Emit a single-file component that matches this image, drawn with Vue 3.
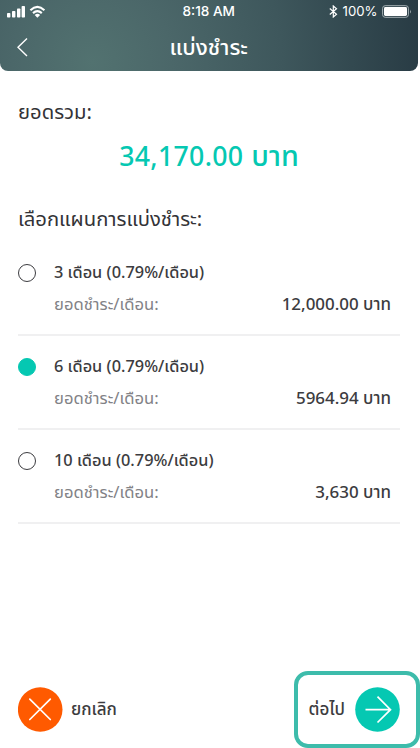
<script setup>
import { ref } from 'vue'

const selected = ref(6)
const plans = [
  { months: 3, amount: '12,000.00' },
  { months: 6, amount: '5964.94' },
  { months: 10, amount: '3,630' }
]
</script>

<template>
  <main class="screen">
    <header class="header">
      <div class="status">
        <div class="signal">
          <svg width="41" height="14" viewBox="0 0 41 14" fill="#fff">
            <rect x="1" y="8" width="3.400" height="4.500" rx=".8" />
            <rect x="6" y="6" width="3.400" height="6.500" rx=".8" />
            <rect x="11" y="3.500" width="3.400" height="9" rx=".8" />
            <rect x="15.600" y="1" width="3.400" height="11.500" rx=".8" />
            <g fill="none" stroke="#fff" stroke-width="2.100">
              <path d="M24.400 5.200Q31.400 -1.400 38.400 5.200" />
              <path d="M27 8.100Q31.400 4.200 35.800 8.100" />
            </g>
            <path d="M28.700 9.900Q31.400 7.800 34.100 9.900L31.400 12.700Z" />
          </svg>
        </div>
        <span class="clock">8:18 AM</span>
        <div class="power">
          <svg class="bluetooth" width="9" height="13" viewBox="0 0 9 13" fill="none" stroke="#fff" stroke-width="1.200">
            <path d="M.8 3.500L7.500 9.200L4.300 12V1L7.500 3.800L.8 9.500" />
          </svg>
          <span class="percent">100%</span>
          <svg width="30" height="13" viewBox="0 0 30 13">
            <rect x=".6" y=".7" width="25.800" height="11.600" rx="2.600" fill="none" stroke="#a5b0b4" />
            <rect x="2" y="2.100" width="23" height="8.800" rx="1.400" fill="#fff" />
            <path d="M28 4.500Q29.600 6.500 28 8.500Z" fill="#a5b0b4" />
          </svg>
        </div>
      </div>
      <div class="nav">
        <svg class="back" width="11" height="20" viewBox="0 0 11 20" fill="none" stroke="#fff" stroke-width="1.400">
          <path d="M10 1.500L1 10.300L10 19" />
        </svg>
        <h1 class="title">แบ่งชำระ</h1>
      </div>
    </header>

    <section class="content">
      <h2 class="label total-label">ยอดรวม:</h2>
      <p class="total"><span class="total-number">34,170.00</span><span class="total-unit">บาท</span></p>
      <h2 class="label plan-label">เลือกแผนการแบ่งชำระ:</h2>
      <ul class="plans">
        <li v-for="plan in plans" :key="plan.months" class="plan" @click="selected = plan.months">
          <span class="radio" :class="{ on: selected === plan.months }"></span>
          <div class="details">
            <p class="name">{{ plan.months }} เดือน (0.79%/เดือน)</p>
            <div class="payment">
              <span class="caption">ยอดชำระ/เดือน:</span>
              <span class="amount">{{ plan.amount }} บาท</span>
            </div>
          </div>
        </li>
      </ul>
    </section>

    <footer class="footer">
      <button class="action cancel">
        <svg width="45" height="45" viewBox="0 0 45 45">
          <circle cx="22.200" cy="22.500" r="22.300" fill="#ff5a00" />
          <path d="M11.800 12.200L32.300 32.500M32.300 12.200L11.800 32.500" stroke="#fff" stroke-width="1.700" stroke-linecap="round" />
        </svg>
        <span class="cancel-text">ยกเลิก</span>
      </button>
      <button class="action next">
        <span class="next-text">ต่อไป</span>
        <svg width="45" height="45" viewBox="0 0 45 45">
          <circle cx="22.500" cy="22.500" r="22.300" fill="#05c8b2" />
          <path d="M10.500 22.700H35M22.500 9.700L35.500 22.700L22.500 35.500" fill="none" stroke="#fff" stroke-width="1.700" />
        </svg>
      </button>
    </footer>
  </main>
</template>

<style>
body {
  background: #fff;
}
</style>

<style scoped>
* {
  box-sizing: border-box;
}
.screen {
  width: 420px;
  height: 748px;
  display: flex;
  flex-direction: column;
  overflow: hidden;
  background: #fff;
  color: #3c3c40;
  font-family: "Noto Sans", "Noto Sans Thai", "Prompt", "Kanit", sans-serif;
}
h1, h2, p, ul {
  margin: 0;
  padding: 0;
  font-weight: 500;
  white-space: nowrap;
}
.header {
  width: 417.500px;
  height: 71px;
  border-radius: 0 0 8px 8px;
  color: #fff;
  background: radial-gradient(circle at 92px 62px, #527270 0, #4b6769 80px, #3e575c 190px, #283b44 330px);
}
.status {
  height: 23px;
  display: grid;
  grid-template-columns: 1fr 60px 1fr;
  align-items: center;
  padding: 0 6px;
}
.signal {
  display: flex;
}
.clock {
  font: 500 13.600px/23px Inter, sans-serif;
  text-align: center;
  white-space: nowrap;
}
.power {
  display: flex;
  align-items: center;
  justify-content: flex-end;
}
.percent {
  font: 400 13.200px/23px Inter, sans-serif;
  margin: 0 4px 0 5px;
}
.nav {
  height: 48px;
  display: grid;
  grid-template-columns: 18px 1fr 18px;
  align-items: center;
  padding: 0 17px;
}
.title {
  font-size: 22px;
  line-height: 44px;
  padding-bottom: 2px;
  text-align: center;
}
.content {
  flex: 1;
  padding: 0 20px 0 18px;
}
.label {
  font-size: 20.250px;
  font-weight: 400;
  color: #333337;
  line-height: 30px;
}
.total-label {
  margin-top: 25px;
}
.total {
  display: flex;
  justify-content: center;
  align-items: baseline;
  gap: 8px;
  margin-top: 11px;
  color: #05c8b2;
  font-size: 26.700px;
  font-weight: 500;
  line-height: 36px;
}
.total-number {
  letter-spacing: .3px;
}
.total-unit {
  font-size: 28.800px;
}
.plan-label {
  margin-top: 29px;
}
.plans {
  list-style: none;
  margin-top: 9px;
}
.plan {
  height: 94px;
  display: flex;
  align-items: flex-start;
  gap: 18px;
  padding-top: 14px;
  border-bottom: 2px solid #f0f0f1;
}
.radio {
  width: 18px;
  height: 18px;
  margin-top: 7.500px;
  border: 1.500px solid #3c3c40;
  border-radius: 50%;
}
.radio.on {
  border-color: #05c8b2;
  background: #05c8b2;
}
.details {
  flex: 1;
}
.name {
  font-size: 16.350px;
  line-height: 32px;
}
.payment {
  display: flex;
  justify-content: space-between;
  padding-right: 9px;
  font-size: 16.650px;
  line-height: 31px;
  white-space: nowrap;
}
.caption {
  color: #828286;
  font-weight: 400;
}
.amount {
  font-size: 16.950px;
  font-weight: 500;
}
.footer {
  height: 77px;
  display: flex;
  justify-content: space-between;
  padding-left: 18px;
}
.action {
  display: flex;
  align-items: center;
  border: 0;
  padding: 0;
  background: transparent;
  color: inherit;
  font-family: inherit;
  font-weight: 500;
  font-size: 17px;
  white-space: nowrap;
}
.cancel {
  gap: 8px;
}
.next {
  width: 126px;
  height: 77px;
  justify-content: flex-end;
  gap: 10px;
  padding-right: 16px;
  border: 4px solid #3dbcab;
  border-radius: 14px;
}
</style>
